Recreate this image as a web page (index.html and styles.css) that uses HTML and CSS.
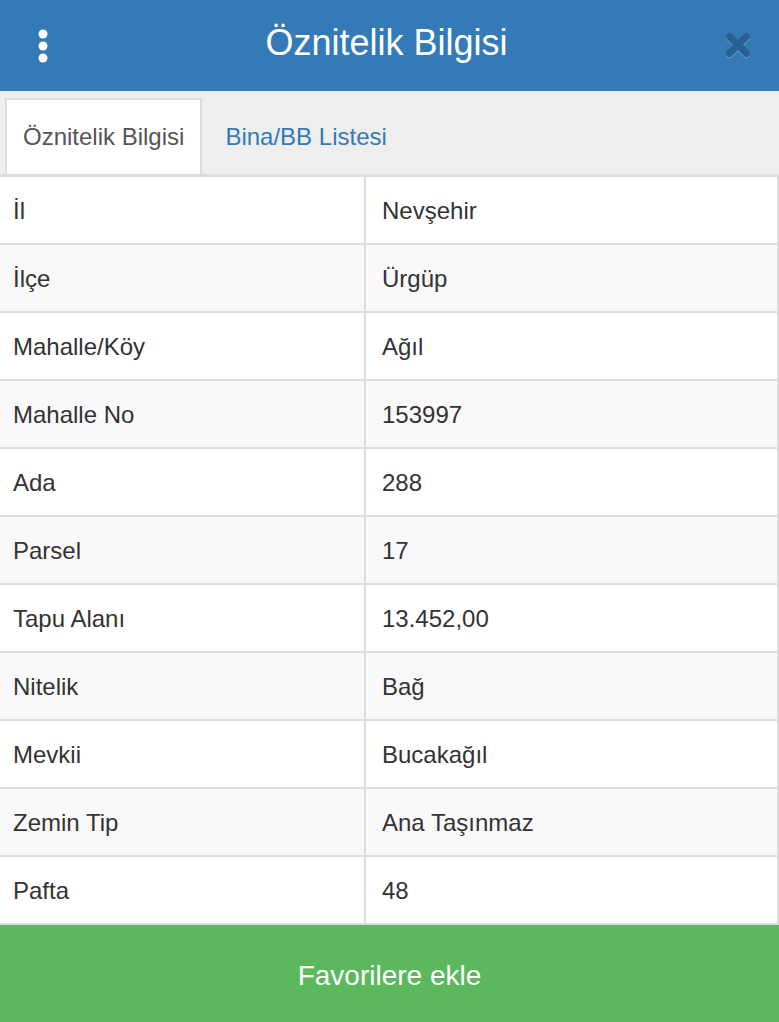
FILE: index.html
```html
<!DOCTYPE html>
<html lang="tr">
<head>
    <meta charset="UTF-8">
    <meta name="viewport" content="width=device-width, initial-scale=1.0">
    <title>Öznitelik Bilgisi</title>
    <link rel="stylesheet" href="styles.css">
</head>
<body>
    <header class="modal-header">
        <button class="menu-btn" aria-label="Menü">
            <svg width="10" height="34" viewBox="0 0 10 34">
                <circle cx="5" cy="5" r="4.5" fill="#fff"/>
                <circle cx="5" cy="17" r="4.5" fill="#fff"/>
                <circle cx="5" cy="29" r="4.5" fill="#fff"/>
            </svg>
        </button>
        <h1 class="modal-title">Öznitelik Bilgisi</h1>
        <button class="close-btn" aria-label="Kapat">
            <svg width="26" height="27" viewBox="0 0 26 27">
                <g opacity="0.2" stroke-width="7" stroke-linecap="round">
                    <g transform="translate(0 1.5)" stroke="#fff">
                        <line x1="4.5" y1="4.5" x2="21.5" y2="21.5"/>
                        <line x1="21.5" y1="4.5" x2="4.5" y2="21.5"/>
                    </g>
                    <g stroke="#000">
                        <line x1="4.5" y1="4.5" x2="21.5" y2="21.5"/>
                        <line x1="21.5" y1="4.5" x2="4.5" y2="21.5"/>
                    </g>
                </g>
            </svg>
        </button>
    </header>

    <nav class="tabs">
        <a href="#" class="tab active">Öznitelik Bilgisi</a>
        <a href="#" class="tab">Bina/BB Listesi</a>
    </nav>

    <table class="attr-table">
        <tbody>
            <tr><td>İl</td><td>Nevşehir</td></tr>
            <tr><td>İlçe</td><td>Ürgüp</td></tr>
            <tr><td>Mahalle/Köy</td><td>Ağıl</td></tr>
            <tr><td>Mahalle No</td><td>153997</td></tr>
            <tr><td>Ada</td><td>288</td></tr>
            <tr><td>Parsel</td><td>17</td></tr>
            <tr><td>Tapu Alanı</td><td>13.452,00</td></tr>
            <tr><td>Nitelik</td><td>Bağ</td></tr>
            <tr><td>Mevkii</td><td>Bucakağıl</td></tr>
            <tr><td>Zemin Tip</td><td>Ana Taşınmaz</td></tr>
            <tr><td>Pafta</td><td>48</td></tr>
        </tbody>
    </table>

    <button class="fav-btn">Favorilere ekle</button>
</body>
</html>
```

FILE: styles.css
```css
:root {
    --primary: #337ab7;
    --border: #dddddd;
    --text: #333333;
    --green: #5cb85c;
}

* {
    box-sizing: border-box;
}

body {
    font-family: "Liberation Sans", Arial, Helvetica, sans-serif;
    color: var(--text);
    margin: 0;
    padding: 0;
    background-color: #fff;
}

button {
    font-family: inherit;
    border: none;
    background: none;
    padding: 0;
    cursor: pointer;
}

.modal-header {
    height: 91px;
    background-color: var(--primary);
    display: grid;
    grid-template-columns: 86px 1fr 86px;
    align-items: center;
}

.menu-btn {
    display: flex;
    justify-content: center;
    align-items: center;
    height: 91px;
}

.modal-title {
    margin: 0 6px 6px 0;
    text-align: center;
    color: #fff;
    font-size: 36px;
    font-weight: normal;
    line-height: 1;
}

.close-btn {
    display: flex;
    justify-content: center;
    align-items: center;
    height: 91px;
    padding-left: 4px;
}

.tabs {
    background-color: #eeeeee;
    padding: 7px 0 0 5px;
    display: flex;
    gap: 5px;
    border-bottom: 3px solid var(--border);
}

.tab {
    display: block;
    height: 76px;
    line-height: 74px;
    padding: 0 16px;
    font-size: 24px;
    color: var(--primary);
    text-decoration: none;
    border: 2px solid transparent;
    border-bottom: none;
}

.tab.active {
    background-color: #fff;
    color: #555555;
    border-color: var(--border);
}

.attr-table {
    width: 100%;
    table-layout: fixed;
    border-collapse: separate;
    border-spacing: 0;
    border-right: 2px solid var(--border);
}

.attr-table td {
    height: 68px;
    padding: 2px 16px 0;
    font-size: 24px;
    border-bottom: 2px solid var(--border);
    vertical-align: middle;
}

.attr-table td:first-child {
    width: 366px;
    padding-left: 13px;
    border-right: 2px solid var(--border);
}

.attr-table tr:nth-child(even) td {
    background-color: #f9f9f9;
}

.fav-btn {
    display: block;
    width: 100%;
    height: 97px;
    padding-top: 4px;
    background-color: var(--green);
    color: #fff;
    font-size: 28px;
}
```
